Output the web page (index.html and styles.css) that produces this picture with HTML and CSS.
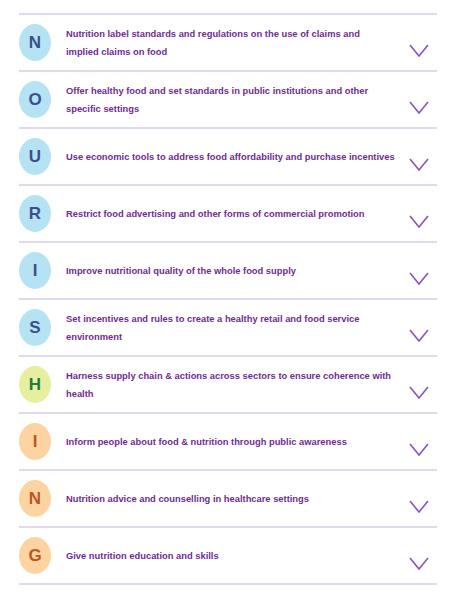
FILE: index.html
```html
<!DOCTYPE html>
<html>
<head>
<meta charset="utf-8">
<link rel="stylesheet" href="styles.css">
</head>
<body>
<ul class="list">
  <li class="row"><span class="badge blue">N</span><span class="text">Nutrition label standards and regulations on the use of claims and<br>implied claims on food</span><svg class="chev" viewBox="0 0 20 13"><path d="M1 1 L10 12 L19 1"/></svg></li>
  <li class="row"><span class="badge blue">O</span><span class="text">Offer healthy food and set standards in public institutions and other specific settings</span><svg class="chev" viewBox="0 0 20 13"><path d="M1 1 L10 12 L19 1"/></svg></li>
  <li class="row"><span class="badge blue">U</span><span class="text">Use economic tools to address food affordability and purchase incentives</span><svg class="chev" viewBox="0 0 20 13"><path d="M1 1 L10 12 L19 1"/></svg></li>
  <li class="row"><span class="badge blue">R</span><span class="text">Restrict food advertising and other forms of commercial promotion</span><svg class="chev" viewBox="0 0 20 13"><path d="M1 1 L10 12 L19 1"/></svg></li>
  <li class="row"><span class="badge blue">I</span><span class="text">Improve nutritional quality of the whole food supply</span><svg class="chev" viewBox="0 0 20 13"><path d="M1 1 L10 12 L19 1"/></svg></li>
  <li class="row"><span class="badge blue">S</span><span class="text">Set incentives and rules to create a healthy retail and food service environment</span><svg class="chev" viewBox="0 0 20 13"><path d="M1 1 L10 12 L19 1"/></svg></li>
  <li class="row"><span class="badge green">H</span><span class="text">Harness supply chain &amp; actions across sectors to ensure coherence with health</span><svg class="chev" viewBox="0 0 20 13"><path d="M1 1 L10 12 L19 1"/></svg></li>
  <li class="row"><span class="badge orange">I</span><span class="text">Inform people about food &amp; nutrition through public awareness</span><svg class="chev" viewBox="0 0 20 13"><path d="M1 1 L10 12 L19 1"/></svg></li>
  <li class="row"><span class="badge orange">N</span><span class="text">Nutrition advice and counselling in healthcare settings</span><svg class="chev" viewBox="0 0 20 13"><path d="M1 1 L10 12 L19 1"/></svg></li>
  <li class="row"><span class="badge orange">G</span><span class="text">Give nutrition education and skills</span><svg class="chev" viewBox="0 0 20 13"><path d="M1 1 L10 12 L19 1"/></svg></li>
</ul>
</body>
</html>
```
FILE: styles.css
```css
html, body {
  margin: 0;
  padding: 0;
  background: #ffffff;
}
body {
  font-family: "Liberation Sans", Arial, sans-serif;
}
.list {
  list-style: none;
  margin: 0;
  padding: 13px 0 0 19px;
  width: 418px;
}
.row {
  display: flex;
  align-items: center;
  height: 55px;
  border-top: 2px solid #e2d9ee;
}
.row:last-child {
  border-bottom: 2px solid #e2d9ee;
}
.badge {
  flex: none;
  width: 32px;
  height: 37px;
  border-radius: 50%;
  display: flex;
  align-items: center;
  justify-content: center;
  font-weight: bold;
  font-size: 17px;
}
.blue { background: #b5e3f4; color: #3b4f8f; }
.green { background: #e5ef9e; color: #1f7a3b; }
.orange { background: #fdd3a2; color: #b65a1f; }
.text {
  flex: none;
  width: 330px;
  margin-left: 15px;
  font-size: 9.35px;
  font-weight: bold;
  line-height: 18px;
  color: #6e2c93;
}
.chev {
  flex: none;
  width: 20px;
  height: 13px;
  margin-left: 13px;
  margin-top: 15px;
  fill: none;
  stroke: #8a52c0;
  stroke-width: 1.6;
}
```
